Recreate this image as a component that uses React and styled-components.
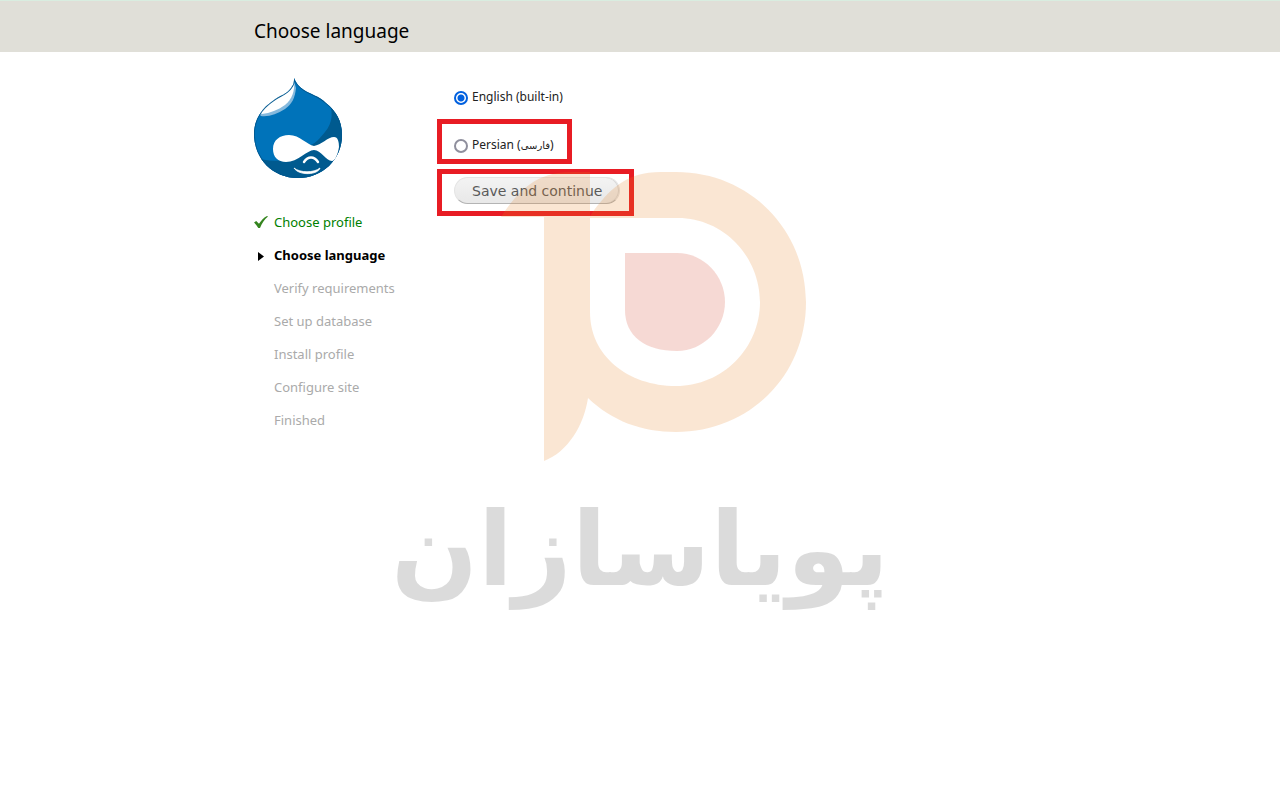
import React, { useState } from 'react'
import styled, { createGlobalStyle, css } from 'styled-components'

const GlobalStyle = createGlobalStyle`
  *, *::before, *::after {
    box-sizing: border-box;
  }

  body {
    margin: 0;
    background: #fff;
    color: #222;
    font-family: 'Noto Sans', 'DejaVu Sans', sans-serif;
    font-size: 13px;
    line-height: 18px;
  }
`

const Container = styled.div`
  width: 100%;
  max-width: 772px;
  margin: 0 auto;
`

const Branding = styled.header`
  padding: 16px 0 7px;
  border-top: 1px solid #d9ede0;
  background: #e0dfd8;
`

const PageTitle = styled.h1`
  margin: 0;
  color: #000;
  font-size: 19px;
  font-weight: 400;
  line-height: 28px;
`

const Page = styled(Container)`
  display: grid;
  grid-template-columns: 184px 1fr;
  gap: 16px;
  padding: 26px 0;
`

const Sidebar = styled.aside`
  display: flex;
  flex-direction: column;
  gap: 27px;
`

const TaskList = styled.ol`
  margin: 0;
  padding: 0;
  list-style: none;
`

const taskStates = {
  done: css`
    color: #008000;
  `,
  active: css`
    color: #000;
    font-weight: 700;
  `,
  pending: css`
    color: #aaa;
  `,
}

const TaskItem = styled.li`
  display: grid;
  grid-template-columns: 14px 1fr;
  gap: 6px;
  align-items: center;
  height: 33px;
  ${(props) => taskStates[props.$state]}
`

const TaskLabel = styled.span`
  grid-column: 2;
`

const Form = styled.form`
  display: flex;
  flex-direction: column;
  align-items: flex-start;
  padding-top: 10px;
`

const highlight = css`
  &::after {
    content: '';
    position: absolute;
    border: 5px solid #e81c24;
    pointer-events: none;
  }
`

const Option = styled.label`
  position: relative;
  display: flex;
  align-items: center;
  gap: 4px;
  margin-bottom: 30px;
  color: #222;
  font-size: 12px;

  ${(props) => props.$marked && css`
    margin-bottom: 23px;
    ${highlight}

    &::after {
      inset: -17px -18px -10px -17px;
    }
  `}
`

const Radio = styled.input`
  appearance: none;
  width: 14px;
  height: 14px;
  margin: 2px 0 0;
  border: 2px solid #8f8f9d;
  border-radius: 50%;
  background: #fff;

  &:checked {
    border-color: #0060df;
    background: radial-gradient(circle, #0060df 3px, #fff 4px);
  }
`

const NativeName = styled.bdi`
  font-family: 'DejaVu Sans', sans-serif;
  font-size: 10px;
  line-height: 1;
`

const Actions = styled.div`
  position: relative;
  ${highlight}

  &::after {
    inset: -8px -14px -12px -17px;
  }
`

const SubmitButton = styled.button`
  display: block;
  height: 27px;
  padding: 1px 17px 0;
  border: 1px solid #e4e4e4;
  border-bottom-color: #b4b4b4;
  border-radius: 14px;
  background: linear-gradient(#f3f3f3, #e8e8e8);
  box-shadow: inset -1px 0 0 #d4d4d4;
  color: #5a5a5a;
  font-family: 'DejaVu Sans', Verdana, sans-serif;
  font-size: 14px;
  line-height: 24px;
  cursor: pointer;
`

const Watermark = styled.div`
  position: fixed;
  inset: 0;
  display: flex;
  flex-direction: column;
  align-items: center;
  justify-content: center;
  gap: 10px;
  pointer-events: none;
`

const Wordmark = styled.div`
  color: #000;
  font-family: 'DejaVu Sans', sans-serif;
  font-size: 102px;
  font-weight: 700;
  line-height: 156px;
  white-space: nowrap;
  opacity: 0.14;
`

const Logo = () => (
  <svg width="88" height="100" viewBox="0 0 88 100" role="img" aria-label="Drupal">
    <defs>
      <clipPath id="drop">
        <path d="M40 0C42 5 45 9 50 12C56 16 65 18 72 25C82 33 88 43 88 57C88 82 68 100 44 100C19 100 0 81 0 56C0 41 8 30 20 22C27 17 33 16 37 10C40 6 40 4 40 0Z" />
      </clipPath>
    </defs>
    <g clipPath="url(#drop)">
      <path d="M0 0H88V100H0Z" fill="#0073ba" />
      <path d="M73 20C80 32 79 45 71 54C66 60 62 65 57 67L30 82C20 84 8 82 0 79V100H88V30Z" fill="#005a8f" />
      <path d="M40 3L42 10C41 20 38 26 31 31C23 36 15 39 7 38L0 30L20 15Z" fill="#85b9dd" />
      <path d="M40 3C41 13 38 21 31 27C24 32 16 35 8 36L0 30L20 15Z" fill="#fff" />
      <path d="M40 0C42 5 45 9 50 12C56 16 65 18 72 25C82 33 88 43 88 57C88 82 68 100 44 100C19 100 0 81 0 56C0 41 8 30 20 22C27 17 33 16 37 10C40 6 40 4 40 0Z" fill="none" stroke="#00568c" strokeWidth="1.6" />
    </g>
    <path d="M19 71C19 62 26 57 35 57C46 57 53 67 60 68C67 67 74 59 80 59C84 59 85 64 85 69C84 76 81 83 78 83C72 83 67 72 60 72C53 72 44 84 32 84C24 84 19 79 19 71Z" fill="#fff" />
    <path d="M50 84C54 78 60 78 64 84" fill="none" stroke="#fff" strokeWidth="2.4" strokeLinecap="round" />
    <path d="M40 90C46 95 60 95 66 90C64 97 45 98 40 90Z" fill="#fff" stroke="#fff" strokeWidth="0.8" strokeLinejoin="round" />
  </svg>
)

const CheckIcon = () => (
  <svg width="14" height="14" viewBox="0 0 14 14" aria-hidden="true">
    <path d="M0 7.500L2.200 6L5 8.800C7.500 5 10 2.500 13 1L14 1.500C10.500 4.500 8 8 6 13H4.300C3 11 1.500 9 0 7.500Z" fill="#35851f" />
  </svg>
)

const ArrowIcon = () => (
  <svg width="14" height="14" viewBox="0 0 14 14" aria-hidden="true">
    <path d="M4 4L10 8.500L4 13Z" fill="#000" />
  </svg>
)

const WatermarkLogo = () => (
  <svg width="486" height="290" viewBox="0 0 486 290" aria-hidden="true">
    <path d="M104 45C122 18 139 0 175 0H193V140C193 184 231 214 279 214C326 214 363 176 363 130C363 84 326 46 281 46H193V44C212 17 229 0 264 0H279C353 0 409 58 409 130C409 204 352 260 279 260C245 260 215 249 191 226C187 253 171 280 147 289V45Z" fill="#e68223" fillOpacity="0.2" />
    <path d="M228 81H280C307 81 328 104 328 130C328 157 306 179 280 179C248 179 228 164 228 138Z" fill="#d24128" fillOpacity="0.2" />
  </svg>
)

const tasks = [
  { name: 'Choose profile', state: 'done' },
  { name: 'Choose language', state: 'active' },
  { name: 'Verify requirements', state: 'pending' },
  { name: 'Set up database', state: 'pending' },
  { name: 'Install profile', state: 'pending' },
  { name: 'Configure site', state: 'pending' },
  { name: 'Finished', state: 'pending' },
]

const languages = [
  { code: 'en', name: 'English', note: 'built-in' },
  { code: 'fa', name: 'Persian', native: 'فارسی', marked: true },
]

const App = () => {
  const [language, setLanguage] = useState('en')

  return (
    <>
      <GlobalStyle />
      <Branding>
        <Container>
          <PageTitle>Choose language</PageTitle>
        </Container>
      </Branding>
      <Page>
        <Sidebar>
          <Logo />
          <TaskList>
            {tasks.map((task) => (
              <TaskItem key={task.name} $state={task.state}>
                {task.state === 'done' && <CheckIcon />}
                {task.state === 'active' && <ArrowIcon />}
                <TaskLabel>{task.name}</TaskLabel>
              </TaskItem>
            ))}
          </TaskList>
        </Sidebar>
        <main>
          <Form onSubmit={(e) => e.preventDefault()}>
            {languages.map(({ code, name, note, native, marked }) => (
              <Option key={code} htmlFor={`locale-${code}`} $marked={marked}>
                <Radio
                  type="radio"
                  id={`locale-${code}`}
                  name="locale"
                  value={code}
                  checked={language === code}
                  onChange={() => setLanguage(code)}
                />
                <span>
                  {name} ({native ? <NativeName lang={code}>{native}</NativeName> : note})
                </span>
              </Option>
            ))}
            <Actions>
              <SubmitButton type="submit">Save and continue</SubmitButton>
            </Actions>
          </Form>
        </main>
      </Page>
      <Watermark>
        <WatermarkLogo />
        <Wordmark lang="fa" dir="rtl">پویاسازان</Wordmark>
      </Watermark>
    </>
  )
}

export default App
